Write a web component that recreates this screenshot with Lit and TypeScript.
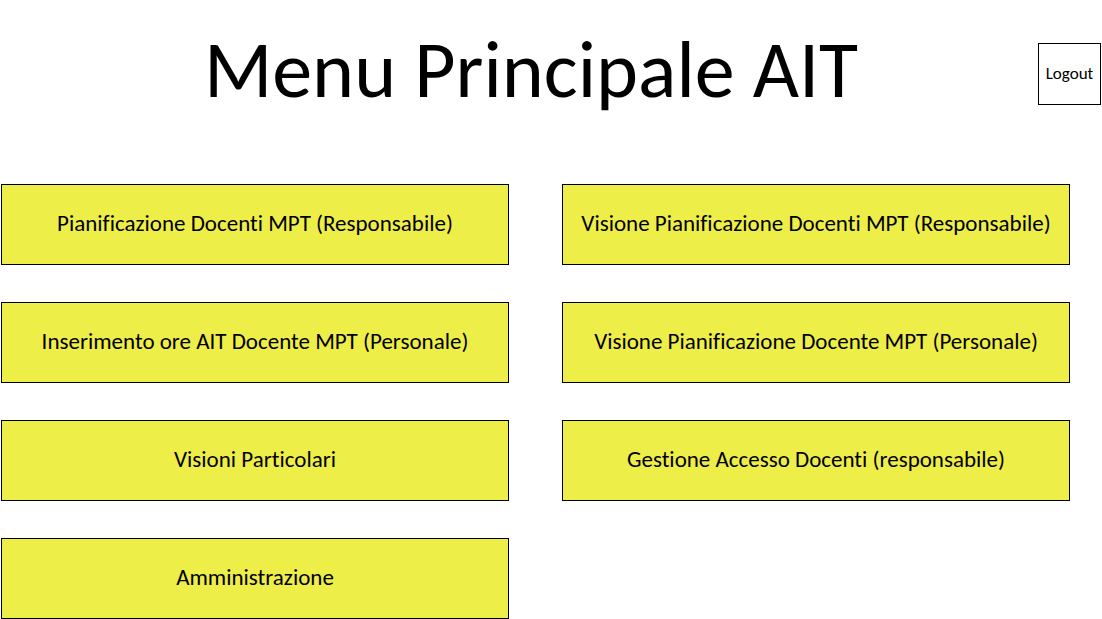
import { LitElement, html, css } from "lit";
import { customElement } from "lit/decorators.js";

const ENTRIES = [
  "Pianificazione Docenti MPT (Responsabile)",
  "Visione Pianificazione Docenti MPT (Responsabile)",
  "Inserimento ore AIT Docente MPT (Personale)",
  "Visione Pianificazione Docente MPT (Personale)",
  "Visioni Particolari",
  "Gestione Accesso Docenti (responsabile)",
  "Amministrazione",
];

@customElement("app-root")
export class AppRoot extends LitElement {
  static styles = css`
    :host {
      display: block;
      background: #fff;
      color: #000;
      font-family: Carlito, Calibri, Lato, "Open Sans", sans-serif;
      font-variant-ligatures: none;
    }
    .header {
      display: flex;
      align-items: flex-start;
      padding: 22px 1px 0 24px;
    }
    .title {
      flex: 1;
      margin: 0;
      font-size: 80px;
      line-height: 96px;
      font-weight: 400;
      text-align: center;
    }
    button {
      box-sizing: border-box;
      margin: 0;
      border: 1px solid #000;
      border-radius: 0;
      color: inherit;
      font-family: inherit;
      font-variant-ligatures: inherit;
      cursor: pointer;
    }
    .logout {
      width: 63px;
      height: 62px;
      margin-top: 21px;
      padding: 0;
      background: #fff;
      font-size: 17px;
      line-height: 20px;
    }
    .menu {
      display: grid;
      grid-template-columns: 1fr 1fr;
      gap: 37px 53px;
      padding: 66px 32px 0 1px;
    }
    .entry {
      min-height: 81px;
      padding: 0 8px 4px;
      background: #eeee49;
      font-size: 23px;
      line-height: 28px;
    }
  `;

  render() {
    return html`
      <header class="header">
        <h1 class="title">Menu Principale AIT</h1>
        <button class="logout" type="button">Logout</button>
      </header>
      <nav class="menu">
        ${ENTRIES.map(
          (label) => html`<button class="entry" type="button">${label}</button>`
        )}
      </nav>
    `;
  }
}
